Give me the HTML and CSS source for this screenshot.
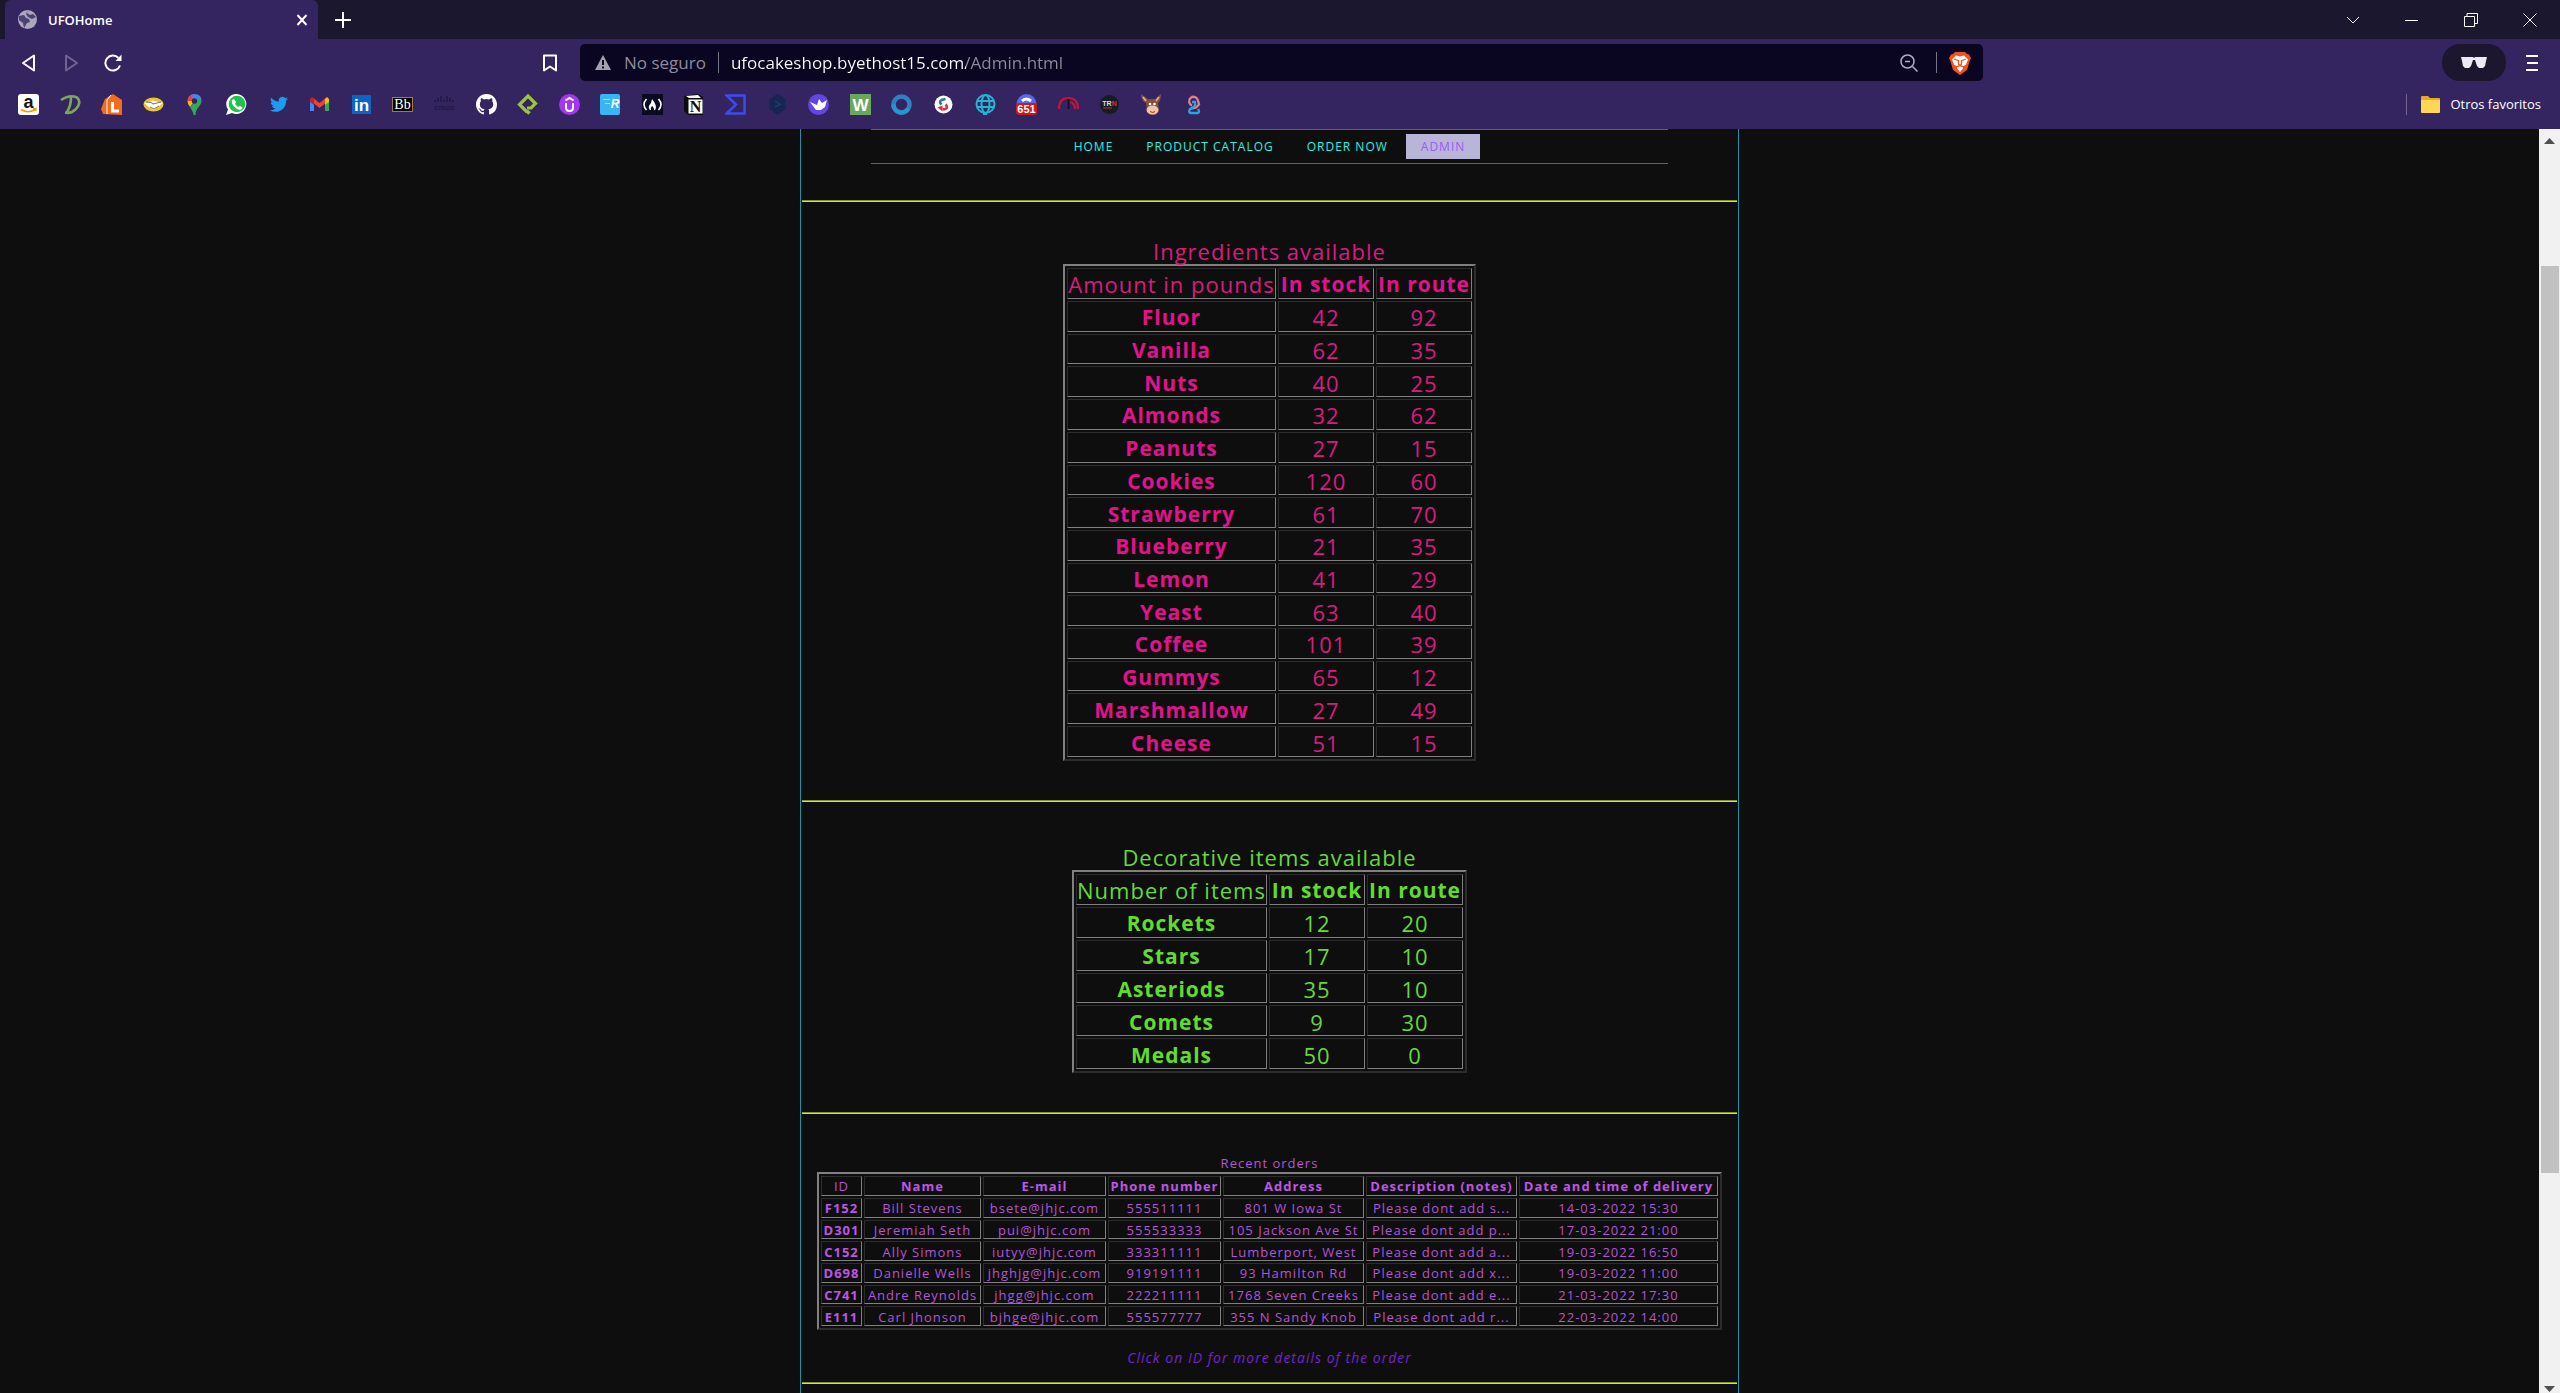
FILE: index.html
```html
<!DOCTYPE html>
<html lang="en">
<head>
<meta charset="utf-8">
<title>UFOHome</title>
<link rel="stylesheet" href="styles.css">
</head>
<body>
<div class="browser">
<header class="chrome">
  <div class="tabstrip">
    <div class="tab">
      <svg class="icon" viewBox="0 0 21 21"><circle cx="10.500" cy="10.500" r="9.500" fill="#a9a6bd"/><path d="M2 7l5-1 2 3 3 1 1 3-3 1-3 5-1-5-4-3zM11 1l-1 3 3 2 3-1 3 3-4 2-4-2-2-3z" fill="#4b4172"/></svg>
      <span class="tab-title">UFOHome</span>
      <button class="plain" aria-label="Close tab"><svg width="14" height="14" viewBox="0 0 14 14"><path d="M2.500 2l9 10M11.500 2l-9 10" stroke="#fff" stroke-width="2"/></svg></button>
    </div>
    <button class="plain new-tab" aria-label="New tab"><svg width="16" height="16" viewBox="0 0 16 16"><path d="M8 0v16M0 8h16" stroke="#fff" stroke-width="2"/></svg></button>
    <div class="window-buttons">
      <button class="plain" aria-label="Search tabs"><svg width="14" height="14" viewBox="0 0 14 14"><path d="M1 4l6 6 6-6" fill="none" stroke="#fff"/></svg></button>
      <button class="plain" aria-label="Minimize"><svg width="14" height="14" viewBox="0 0 14 14"><path d="M0 7.500h13" stroke="#fff"/></svg></button>
      <button class="plain" aria-label="Restore"><svg width="14" height="14" viewBox="0 0 14 14"><path d="M.5 3.500h10v10H.5zM3 3V.5h10.500v10H11" fill="none" stroke="#fff"/></svg></button>
      <button class="plain" aria-label="Close"><svg width="14" height="14" viewBox="0 0 14 14"><path d="M.5.5l13 13M13.500.5l-13 13" stroke="#fff"/></svg></button>
    </div>
  </div>
  <div class="toolbar">
    <div class="toolbar-left">
      <button class="plain" aria-label="Back"><svg width="18" height="18" viewBox="0 0 18 18"><path d="M14 1.500v15L3 9z" fill="none" stroke="#fff" stroke-width="2" stroke-linejoin="round"/></svg></button>
      <button class="plain" aria-label="Forward"><svg width="18" height="18" viewBox="0 0 18 18"><path d="M4 1.500v15L15 9z" fill="none" stroke="#6f648f" stroke-width="2" stroke-linejoin="round"/></svg></button>
      <button class="plain" aria-label="Reload"><svg width="18" height="18" viewBox="0 0 18 18"><path d="M16 11.500A7.500 7.500 0 1 1 14.500 4" fill="none" stroke="#fff" stroke-width="2"/><path d="M17.500.5v6.500h-6z" fill="#fff"/></svg></button>
      <button class="plain bookmark" aria-label="Bookmark"><svg width="18" height="18" viewBox="0 0 18 18"><path d="M3 1.500h12v15L9 12.500 3 16.500z" fill="none" stroke="#fff" stroke-width="2" stroke-linejoin="round"/></svg></button>
    </div>
    <div class="address">
      <svg width="16" height="15" viewBox="0 0 16 15"><path d="M8 0l8 15H0z" fill="#a3a1b0"/><path d="M8 5v5M8 11.500v2" stroke="#0a0520" stroke-width="2"/></svg>
      <label class="security" for="url">No seguro</label>
      <span class="divider"></span>
      <input class="url" id="url" type="text" value="ufocakeshop.byethost15.com/Admin.html">
      <button class="plain zoom" aria-label="Zoom"><svg width="18" height="18" viewBox="0 0 18 18"><circle cx="7.500" cy="7.500" r="6.500" fill="none" stroke="#b0adc0" stroke-width="1.500"/><path d="M12.500 12.500l5 5M5 7.500h5" stroke="#b0adc0" stroke-width="1.500"/></svg></button>
      <span class="divider"></span>
      <button class="plain" aria-label="Shields"><svg width="22" height="24" viewBox="0 0 22 24"><path d="M6 1h10l2 2 2 .5L22 7l-1 2-3 10-7 5-7-5L1 9 0 7l2-3.500L4 3z" fill="#f4511e"/><path d="M7 4.500l4 1 4-1 4 4-2 5-3 2v2l-3 3.500L8 17.500v-2l-3-2-2-5z" fill="#fff"/><path d="M5 8l4 1.500M17 8l-4 1.500M9.500 9v4L11 15l1.500-2V9M7.500 16l3.500-1.500 3.500 1.500" fill="none" stroke="#f4511e" stroke-width="1.300"/></svg></button>
    </div>
    <div class="toolbar-right">
      <button class="plain private" aria-label="Private window"><svg width="26" height="11" viewBox="0 0 26 11"><path d="M0 0h12l1 1 1-1h12l-1 4-1 5-2 2h-4l-2-2-2-6h-2l-2 6-2 2H4L2 9 1 4z" fill="#ecebf2"/></svg></button>
      <button class="plain" aria-label="Menu"><svg width="12" height="18" viewBox="0 0 12 18"><path d="M0 2h12M1 9h11M0 16h12" stroke="#fff" stroke-width="2"/></svg></button>
    </div>
  </div>
  <nav class="favorites" aria-label="Favorites">
    <div class="favorite-list">
      <a href="#" aria-label="Amazon"><svg class="icon" viewBox="0 0 21 21"><rect width="21" height="21" rx="3" fill="#fff"/><text x="10.500" y="14" font-size="18" font-weight="700" text-anchor="middle" fill="#111">a</text><path d="M3 15.500q7 4.500 14 0M15 15l3-.5-.5 2.500" fill="none" stroke="#f90" stroke-width="1.500"/></svg></a>
      <a href="#" aria-label="D"><svg class="icon" viewBox="0 0 21 21"><path d="M1 6Q10 0 17 3.500 22 8 16 15 11 20 5 18.500M11 3Q11 12 7 18" fill="none" stroke="#7da65a" stroke-width="2.600"/></svg></a>
      <a href="#" aria-label="L"><svg class="icon" viewBox="0 0 21 21"><path d="M0 15L4 5l8-5 9 6v15L2 20z" fill="#f56a1b"/><path d="M6 20V6l4-5" fill="none" stroke="#fff"/><path d="M11.500 8v9h6.500" fill="none" stroke="#fff" stroke-width="3"/></svg></a>
      <a href="#" aria-label="Mercado"><svg class="icon" viewBox="0 0 21 21"><ellipse cx="10.500" cy="10.500" rx="10" ry="7" fill="#e9c62d"/><path d="M1 9l5-1 4-1.500 5 1.500 5 1-4 3-5 4-5-3z" fill="#fff"/><path d="M3 8l5 .5 2 1.500 4-1 4-1M7 13l4 2 5-3" fill="none" stroke="#77756a"/></svg></a>
      <a href="#" aria-label="Maps"><svg class="icon" viewBox="0 0 21 21"><path d="M10.500 0C6 0 3.500 3 3.500 7l7 0z" fill="#ea4335"/><path d="M10.500 0c5 0 7 3 7 7h-7L7 1z" fill="#4285f4"/><path d="M3.500 7q0 3 2.500 6l4.500-6z" fill="#fbbc04"/><path d="M17.500 7c0 5-6 7-6 14h-2c0-3-2-5-3.500-8l8-9z" fill="#34a853"/><circle cx="10.500" cy="7" r="2.700" fill="#342560"/></svg></a>
      <a href="#" aria-label="WhatsApp"><svg class="icon" viewBox="0 0 21 21"><path d="M11 0a10 10 0 1 1-5 19L0 21l2-5.500A10 10 0 0 1 11 0z" fill="#fff"/><circle cx="11" cy="10" r="8.300" fill="#1fc24c"/><path d="M6 6l2-1 2 3-1 2 3 3 2-1 2.500 1.500-1 2Q12 17 8 12.500 5 9 6 6z" fill="#fff"/></svg></a>
      <a href="#" aria-label="Twitter"><svg class="icon" viewBox="1 1 22 22"><path d="M22 6c-.7.3-1.400.5-2.200.6.8-.5 1.400-1.200 1.700-2.100-.7.400-1.600.8-2.400.9A3.900 3.900 0 0 0 12.400 9C9.200 8.800 6.300 7.300 4.400 5 3.400 6.800 3.900 9 5.600 10.200c-.6 0-1.200-.2-1.700-.5 0 1.900 1.300 3.400 3.100 3.800-.6.200-1.200.2-1.800.1.500 1.500 1.900 2.600 3.600 2.700A7.800 7.800 0 0 1 3 17.900c7.800 4.600 17.300-.6 17-10.200.8-.5 1.500-1 2-1.700z" fill="#1d9bf0"/></svg></a>
      <a href="#" aria-label="Gmail"><svg class="icon" viewBox="0 0 21 21"><path d="M1 17V5h4v12z" fill="#4285f4"/><path d="M16 17V5h4v12z" fill="#34a853"/><path d="M3 5.500l7.500 6 7.500-6" fill="none" stroke="#ea4335" stroke-width="4"/><path d="M1 8V5l2-2 2 2v6z" fill="#c5221f"/><path d="M20 8V5l-2-2-2 2v6z" fill="#fbbc04"/></svg></a>
      <a href="#" aria-label="LinkedIn"><svg class="icon" viewBox="0 0 21 21"><rect x="1" y="1" width="19" height="19" fill="#0a66c2"/><text x="10.500" y="17" font-size="17" font-weight="700" text-anchor="middle" fill="#fff">in</text></svg></a>
      <a href="#" aria-label="Blackboard"><svg class="icon" viewBox="0 0 21 21"><rect x=".5" y="3.500" width="20" height="14" fill="#000" stroke="#9b7f40"/><text class="serif" x="10.500" y="15" font-size="14" text-anchor="middle" fill="#fff">Bb</text></svg></a>
      <a href="#" aria-label="Cisco"><svg class="icon" viewBox="0 0 21 21"><path d="M1 6v2M4 4v4M7 2v6M10 5v3M13 2v6M16 4v4M19 6v2" stroke="#201840" stroke-width="1.500"/><text x="10.500" y="16" font-size="8" font-weight="700" text-anchor="middle" fill="#201840">cisco</text></svg></a>
      <a href="#" aria-label="GitHub"><svg class="icon" viewBox="0 0 16 16"><path fill="#fff" d="M8 0C3.580 0 0 3.580 0 8c0 3.540 2.290 6.530 5.470 7.590.4.070.55-.17.55-.38 0-.19-.01-.82-.01-1.490-2.010.37-2.530-.49-2.690-.94-.09-.23-.48-.94-.82-1.130-.28-.15-.68-.52-.01-.53.63-.01 1.080.58 1.230.82.72 1.210 1.870.87 2.330.66.070-.52.28-.87.51-1.070-1.780-.2-3.640-.89-3.640-3.950 0-.87.31-1.590.82-2.150-.08-.2-.36-1.020.08-2.120 0 0 .67-.21 2.200.82a7.420 7.420 0 0 1 4 0c1.530-1.040 2.200-.82 2.200-.82.44 1.100.16 1.920.08 2.120.51.56.82 1.270.82 2.150 0 3.070-1.870 3.750-3.650 3.950.29.25.54.73.54 1.480 0 1.070-.01 1.930-.01 2.200 0 .21.15.46.55.38A8 8 0 0 0 16 8c0-4.420-3.580-8-8-8z"/></svg></a>
      <a href="#" aria-label="Code"><svg class="icon" viewBox="0 0 21 21"><path d="M10 18L2.500 10.500 11 2l7.500 7.500-4.500 4.500h-4" fill="none" stroke="#9bc53d" stroke-width="3.200"/><path d="M10 17l2.500 2.500" stroke="#9bc53d" stroke-width="3.500"/></svg></a>
      <a href="#" aria-label="Udemy"><svg class="icon" viewBox="0 0 21 21"><circle cx="10.500" cy="10.500" r="10.500" fill="#a435f0"/><path d="M7 9v4.500q0 3.500 3.500 3.500t3.500-3.500V9M6.500 6.500l4-2.500 4 2.500" fill="none" stroke="#fff" stroke-width="2"/></svg></a>
      <a href="#" aria-label="R"><svg class="icon" viewBox="0 0 21 21"><rect width="20" height="21" rx="2" fill="#39b5f5"/><path d="M3 5.500h7M5 9.500h5" stroke="#a5defc" stroke-width="1.200"/><text x="15" y="14" font-size="12" font-weight="700" font-style="italic" text-anchor="middle" fill="#fff">R</text></svg></a>
      <a href="#" aria-label="freeCodeCamp"><svg class="icon" viewBox="0 0 21 21"><rect width="21" height="21" fill="#0a0a23"/><path d="M4.500 5q-5 5.500 0 11M16.500 5q5 5.500 0 11" fill="none" stroke="#fff" stroke-width="1.600"/><path d="M8 16q-3-3 1-7l1-4q6 7 3 11-1 1-1-1-1-3-2-3-2 2-1 4z" fill="#fff"/></svg></a>
      <a href="#" aria-label="Notion"><svg class="icon" viewBox="0 0 21 21"><path d="M0 2l14-2 5 3v18H4l-4-4z" fill="#0c0b10"/><path d="M2 2l12-1 3 3H5z" fill="#fff"/><rect x="4.500" y="5.500" width="14" height="14" fill="#fff"/><text class="serif" x="11.500" y="18" font-size="16" font-weight="700" text-anchor="middle" fill="#111">N</text></svg></a>
      <a href="#" aria-label="Sigma"><svg class="icon" viewBox="0 0 21 21"><path d="M1.500 1.500h18v18h-18l9.500-9z" fill="none" stroke="#3f4be8" stroke-width="2.500"/></svg></a>
      <a href="#" aria-label="Codelab"><svg class="icon" viewBox="0 0 21 21"><path d="M10.500 0l8 5v10l-8 6-8-6V5z" fill="#152652"/><path d="M8 7l5 3.500L8 13" fill="none" stroke="#1c3f72" stroke-width="1.500"/></svg></a>
      <a href="#" aria-label="Crane"><svg class="icon" viewBox="0 0 21 21"><circle cx="10.500" cy="10.500" r="10.500" fill="#6246e0"/><path d="M2 8l7 3 2-6 3 4 5-3-2 7-4 3H8z" fill="#fff"/></svg></a>
      <a href="#" aria-label="W3"><svg class="icon" viewBox="0 0 21 21"><rect width="21" height="21" fill="#6aa75f"/><text x="10.500" y="16.500" font-size="17" font-weight="700" text-anchor="middle" fill="#fff">W</text></svg></a>
      <a href="#" aria-label="Ring"><svg class="icon" viewBox="0 0 21 21"><circle cx="10.500" cy="10.500" r="8" fill="none" stroke="#2f80c0" stroke-width="4.500"/><path d="M2.500 10.500a8 8 0 0 0 15 4" fill="none" stroke="#2696cc" stroke-width="4.500"/></svg></a>
      <a href="#" aria-label="Swap"><svg class="icon" viewBox="0 0 21 21"><circle cx="10.500" cy="10.500" r="9" fill="#fff"/><path d="M8.500 10.500q-3-3 0-4.500l4-1" fill="none" stroke="#247a94" stroke-width="2.500"/><path d="M12.500 10.500q3 3 0 4.500l-3 .5" fill="none" stroke="#d8323c" stroke-width="2.500"/><path d="M4.500 13.500l5-2v6z" fill="#d8323c"/></svg></a>
      <a href="#" aria-label="Globe"><svg class="icon" viewBox="0 0 21 21"><g fill="none" stroke="#23b5d3" stroke-width="2"><circle cx="10.500" cy="10" r="9"/><ellipse cx="10.500" cy="10" rx="4" ry="9"/><path d="M2 7h17M2 13h17M8 20h4"/></g></svg></a>
      <a href="#" aria-label="Counter"><svg class="icon" viewBox="0 0 21 21"><circle cx="10.500" cy="10" r="10" fill="#5468e8"/><path d="M6 7q4-4 9 0" stroke="#fff" stroke-width="3" fill="none"/><rect x="0" y="9" width="21" height="12" rx="3" fill="#cf1717"/><text x="10.500" y="19" font-size="11" font-weight="700" text-anchor="middle" fill="#fff">651</text></svg></a>
      <a href="#" aria-label="Gauge"><svg class="icon" viewBox="0 0 21 21"><path d="M1 15Q1 4 10.500 4T20 15M12 8q5 1 5 7" fill="none" stroke="#c4163a" stroke-width="2.200"/><path d="M10.500 5v10" stroke="#15122a" stroke-width="2"/></svg></a>
      <a href="#" aria-label="TRN"><svg class="icon" viewBox="0 0 21 21"><circle cx="10.500" cy="10.500" r="9.500" fill="#171c24"/><text x="10.500" y="11.500" font-size="7" font-weight="700" text-anchor="middle" fill="#ddd">TR<tspan fill="#d3343c">N</tspan></text><path d="M4 14h9" stroke="#b33"/></svg></a>
      <a href="#" aria-label="Donkey"><svg class="icon" viewBox="0 0 21 21"><path d="M0 0l7 5h7l6-5q0 7-3 9l1 7q-1 5-6 5t-6-5l-1-7Q0 7 0 0z" fill="#80503c"/><path d="M2 3l3 4M18 3l-3 4" stroke="#e9b095" stroke-width="1.500"/><ellipse cx="11.500" cy="16" rx="6" ry="4.500" fill="#f0c4a4"/><circle cx="9" cy="10" r="1.300" fill="#fff"/><circle cx="13.500" cy="10" r="1.300" fill="#fff"/><path d="M9 17.500q3 2 5 0" fill="none" stroke="#804030"/></svg></a>
      <a href="#" aria-label="Nine"><svg class="icon" viewBox="0 0 21 21"><path d="M9 11.500a4.500 4.500 0 1 1 6-5l1 4-3 3-6 1.500" fill="none" stroke="#f27a82" stroke-width="2.300"/><path d="M9 8h3v4l-5 3q-2 4 1 4h7q2-1 0-4" fill="none" stroke="#21a8e0" stroke-width="2.300"/></svg></a>
    </div>
    <a class="other" href="#"><svg width="19" height="17" viewBox="0 0 19 17"><path d="M0 1q0-1 1-1h6l2 2h9q1 0 1 1v13H0z" fill="#e8a828"/><path d="M0 4h19v12q0 1-1 1H1q-1 0-1-1z" fill="#ffd757"/></svg>Otros favoritos</a>
  </nav>
</header>
<div class="viewport">
  <main class="page">
    <div class="sheet">
      <nav class="site-nav">
        <a href="#">HOME</a><a href="#">PRODUCT CATALOG</a><a href="#">ORDER NOW</a><a class="current" href="#">ADMIN</a>
      </nav>
      <section class="stock ingredients">
        <table>
          <caption>Ingredients available</caption>
          <colgroup><col class="col-label"><col class="col-count"><col class="col-count"></colgroup>
          <thead><tr><td>Amount in pounds</td><th>In stock</th><th>In route</th></tr></thead>
          <tbody>
            <tr><th>Fluor</th><td>42</td><td>92</td></tr>
            <tr><th>Vanilla</th><td>62</td><td>35</td></tr>
            <tr><th>Nuts</th><td>40</td><td>25</td></tr>
            <tr><th>Almonds</th><td>32</td><td>62</td></tr>
            <tr><th>Peanuts</th><td>27</td><td>15</td></tr>
            <tr><th>Cookies</th><td>120</td><td>60</td></tr>
            <tr><th>Strawberry</th><td>61</td><td>70</td></tr>
            <tr><th>Blueberry</th><td>21</td><td>35</td></tr>
            <tr><th>Lemon</th><td>41</td><td>29</td></tr>
            <tr><th>Yeast</th><td>63</td><td>40</td></tr>
            <tr><th>Coffee</th><td>101</td><td>39</td></tr>
            <tr><th>Gummys</th><td>65</td><td>12</td></tr>
            <tr><th>Marshmallow</th><td>27</td><td>49</td></tr>
            <tr><th>Cheese</th><td>51</td><td>15</td></tr>
          </tbody>
        </table>
      </section>
      <section class="stock decorations">
        <table>
          <caption>Decorative items available</caption>
          <colgroup><col class="col-label"><col class="col-count"><col class="col-count"></colgroup>
          <thead><tr><td>Number of items</td><th>In stock</th><th>In route</th></tr></thead>
          <tbody>
            <tr><th>Rockets</th><td>12</td><td>20</td></tr>
            <tr><th>Stars</th><td>17</td><td>10</td></tr>
            <tr><th>Asteriods</th><td>35</td><td>10</td></tr>
            <tr><th>Comets</th><td>9</td><td>30</td></tr>
            <tr><th>Medals</th><td>50</td><td>0</td></tr>
          </tbody>
        </table>
      </section>
      <section class="orders">
        <table>
          <caption>Recent orders</caption>
          <colgroup><col class="col-id"><col class="col-name"><col class="col-mail"><col class="col-phone"><col class="col-address"><col class="col-notes"><col class="col-date"></colgroup>
          <thead><tr><td>ID</td><th>Name</th><th>E-mail</th><th>Phone number</th><th>Address</th><th>Description (notes)</th><th>Date and time of delivery</th></tr></thead>
          <tbody>
            <tr><th>F152</th><td>Bill Stevens</td><td>bsete@jhjc.com</td><td>555511111</td><td>801 W Iowa St</td><td>Please dont add s...</td><td>14-03-2022 15:30</td></tr>
            <tr><th>D301</th><td>Jeremiah Seth</td><td>pui@jhjc.com</td><td>555533333</td><td>105 Jackson Ave St</td><td>Please dont add p...</td><td>17-03-2022 21:00</td></tr>
            <tr><th>C152</th><td>Ally Simons</td><td>iutyy@jhjc.com</td><td>333311111</td><td>Lumberport, West</td><td>Please dont add a...</td><td>19-03-2022 16:50</td></tr>
            <tr><th>D698</th><td>Danielle Wells</td><td>jhghjg@jhjc.com</td><td>919191111</td><td>93 Hamilton Rd</td><td>Please dont add x...</td><td>19-03-2022 11:00</td></tr>
            <tr><th>C741</th><td>Andre Reynolds</td><td>jhgg@jhjc.com</td><td>222211111</td><td>1768 Seven Creeks</td><td>Please dont add e...</td><td>21-03-2022 17:30</td></tr>
            <tr><th>E111</th><td>Carl Jhonson</td><td>bjhge@jhjc.com</td><td>555577777</td><td>355 N Sandy Knob</td><td>Please dont add r...</td><td>22-03-2022 14:00</td></tr>
          </tbody>
        </table>
        <p class="hint">Click on ID for more details of the order</p>
      </section>
    </div>
  </main>
  <div class="scrollbar" aria-hidden="true">
    <svg width="11" height="6" viewBox="0 0 11 6"><path d="M5.500 0L11 6H0z" fill="#505050"/></svg>
    <div class="track"><div class="thumb"></div></div>
    <svg width="11" height="6" viewBox="0 0 11 6"><path d="M0 0h11L5.500 6z" fill="#505050"/></svg>
  </div>
</div>
</div>
</body>
</html>
```
FILE: styles.css
```css
* { box-sizing: border-box; }
body { margin: 0; font-family: "Open Sans", "Noto Sans", sans-serif; background: #0e0e0e; }
svg { display: block; font-family: "Liberation Sans", Arial, sans-serif; }
.serif { font-family: "Liberation Serif", serif; }
.icon { width: 21px; height: 21px; }
.plain { border: 0; padding: 0; background: none; }
.browser { display: flex; flex-direction: column; height: 100vh; overflow: hidden; }

.chrome { flex: none; background: #342560; color: #fff; }
.tabstrip { display: flex; align-items: center; height: 39px; padding-left: 5px; background: #1a172e; }
.tab { display: flex; align-items: center; gap: 10px; width: 313px; height: 39px; padding: 0 9px 0 12px; border-radius: 6px 6px 0 0; background: #342560; }
.tab-title { flex: 1; font-size: 13px; font-weight: 600; }
.new-tab { margin-left: 17px; }
.window-buttons { display: flex; gap: 45px; margin-left: auto; padding-right: 23px; }
.toolbar { display: flex; align-items: center; height: 47px; }
.toolbar-left { display: flex; gap: 24px; width: 580px; padding: 0 21px 0 20px; }
.bookmark { margin-left: auto; }
.address { display: flex; align-items: center; flex: 0 1 1403px; height: 37px; padding: 0 12px 0 15px; border-radius: 5px; background: #0a0520; font-size: 17px; }
.security { margin-left: 13px; color: #8f8c9e; }
.divider { width: 1px; height: 21px; margin: 0 12px; background: #77748a; }
.url { flex: 1; min-width: 0; border: 0; padding: 0; font: inherit; color: transparent; background: linear-gradient(90deg, #fff 235px, #8f8c9e 235px); background-clip: text; }
.zoom { margin-right: 6px; }
.toolbar-right { display: flex; align-items: center; gap: 20px; margin-left: auto; padding-right: 22px; }
.private { display: grid; place-items: center; width: 64px; height: 37px; border-radius: 18px; background: #1c172f; }
.favorites { display: flex; justify-content: space-between; align-items: center; height: 43px; padding: 0 19px 7px 18px; }
.favorite-list { display: flex; justify-content: space-between; flex: 0 1 1186px; }
.other { display: flex; align-items: center; gap: 10px; height: 21px; padding-left: 14px; border-left: 1px solid #6e6494; color: #fff; font-size: 13px; text-decoration: none; }

.viewport { display: flex; flex: 1; min-height: 0; }
.page { flex: 1; overflow: hidden; background: #0e0e0e; text-align: center; }
.sheet { width: 37%; min-width: 939px; min-height: 100%; margin: 0 auto; border: solid #248da3; border-width: 0 1px; }
.site-nav { display: flex; justify-content: center; align-items: center; gap: 3px; width: 85%; height: 35px; margin: 0 auto 36px; border: solid #8a3cc8; border-width: 1px 0; font-size: 12px; font-weight: 500; }
.site-nav a { padding: 0 15px; line-height: 25px; letter-spacing: 1px; color: #2ef0e0; text-decoration: none; }
.site-nav .current { background: #b8b5d8; color: #9a5cf0; font-weight: 400; }

section { margin: 0 1px; padding: 40px 0 39px; border-top: 2px groove #c8ec40; }
.ingredients { padding-top: 34px; }
table { margin: 0 auto; border: 2px solid; border-color: #808080 #2c2c2c #2c2c2c #808080; border-spacing: 2px; table-layout: fixed; }
caption { padding-top: 2px; }
th, td { padding: 0; border: 1px solid; border-color: #2c2c2c #808080 #808080 #2c2c2c; white-space: nowrap; text-align: center; }
.stock { font-size: 22px; line-height: 26px; letter-spacing: 1px; }
.stock th, .stock td { padding-top: 2px; }
.stock th { font-size: 21px; }
.stock thead th, .stock thead td { line-height: 27px; }
.ingredients { color: #d81c7e; }
.ingredients th { color: #e0148a; }
.ingredients table { width: 413px; height: 497px; }
.decorations { color: #66d83a; }
.decorations th { color: #62dc2c; }
.decorations table { width: 395px; height: 203px; }
.col-count { width: 96px; }
.orders { padding: 38px 0 15px; border-bottom: 2px groove #c8ec40; color: #b455d6; font-size: 13px; line-height: 18px; letter-spacing: 1px; }
.orders th { color: #bc56e4; }
.orders th, .orders td { padding-top: 1px; line-height: 16px; }
.orders thead th, .orders thead td { line-height: 17px; }
.orders table { width: 905px; height: 158px; }
.col-id { width: 41px; }
.col-name { width: 117px; }
.col-mail { width: 123px; }
.col-phone { width: 113px; }
.col-address { width: 141px; }
.col-notes { width: 151px; }
.hint { margin: 19px 0 0; color: #7424cc; font-size: 14px; font-style: italic; }

.scrollbar { display: flex; flex-direction: column; align-items: center; width: 21px; padding: 9px 0 1px; background: #f1f1f1; }
.track { flex: 1; width: 18px; padding-top: 122px; }
.thumb { height: 81%; background: #c1c1c1; }
```
